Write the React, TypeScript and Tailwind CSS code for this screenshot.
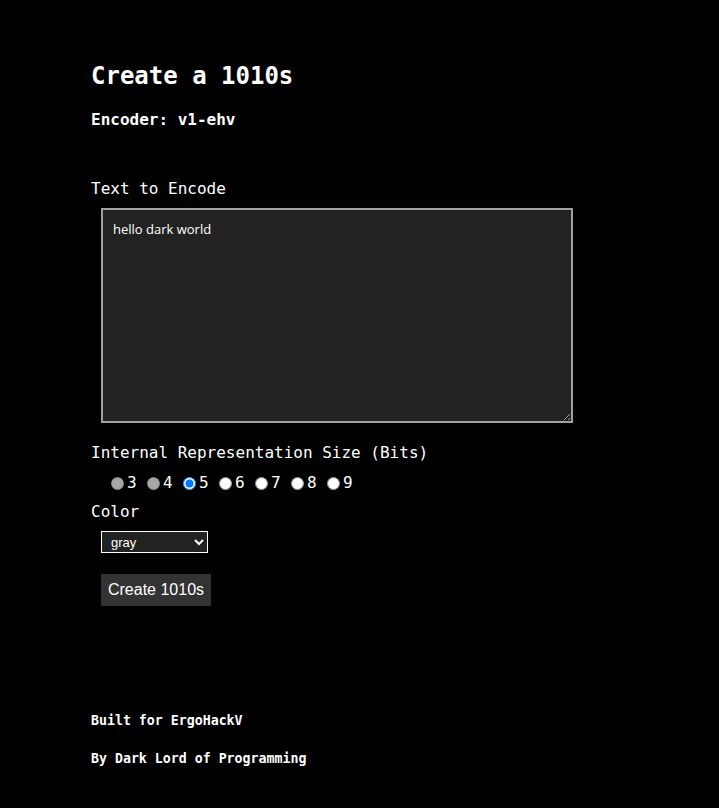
import { useState } from 'react'

const SIZES = [3, 4, 5, 6, 7, 8, 9]

export default function App() {
  const [text, setText] = useState('hello dark world')
  const [bits, setBits] = useState(5)
  const [color, setColor] = useState('gray')

  return (
    <div className="min-h-screen bg-black text-white font-['DejaVu_Sans_Mono',monospace]">
      <div className="pl-[91px] pt-[60px] pb-[40px]">
        <h1 className="text-2xl leading-8 font-bold">Create a 1010s</h1>
        <h3 className="mt-4 text-base leading-6 font-bold">Encoder: v1-ehv</h3>

        {/* Form */}
        <div className="mt-[45px]">
          <label className="block text-base leading-6">Text to Encode</label>
          <textarea
            value={text}
            onChange={(e) => setText(e.target.value)}
            className="block mt-[7px] ml-[10px] w-[472px] h-[215px] p-[10px] border-2 border-[#a0a0a0] bg-[#222] text-[13px] leading-[18px] text-white font-['Open_Sans',sans-serif]"
          />

          <label className="block mt-[18px] text-base leading-6">Internal Representation Size (Bits)</label>
          <div className="flex ml-5 mt-[6px] h-6 items-center">
            {SIZES.map((n) => (
              <label key={n} className="flex items-center w-[36px] text-base leading-6">
                <input
                  type="radio"
                  name="bits"
                  checked={bits === n}
                  disabled={n < 5}
                  onChange={() => setBits(n)}
                  className="m-0 w-[13px] h-[13px]"
                />
                <span className="ml-[3px]">{n}</span>
              </label>
            ))}
          </div>

          <label className="block mt-[5px] text-base leading-6">Color</label>
          <select
            value={color}
            onChange={(e) => setColor(e.target.value)}
            className="block mt-[7px] ml-[10px] w-[107px] h-[22px] pl-[5px] border border-white bg-[#222] text-white text-[13px] font-['Liberation_Sans',Arial,sans-serif]"
          >
            <option value="gray">gray</option>
            <option value="red">red</option>
            <option value="green">green</option>
            <option value="blue">blue</option>
          </select>

          <button className="block mt-[21px] ml-[10px] w-[110px] h-8 bg-[#333] text-white text-base font-['Liberation_Sans',Arial,sans-serif]">
            Create 1010s
          </button>
        </div>

        {/* Footer */}
        <div className="mt-[105px] text-[13.25px] leading-5 font-bold">
          <p>Built for ErgoHackV</p>
          <p className="mt-[18px]">By Dark Lord of Programming</p>
        </div>
      </div>
    </div>
  )
}
